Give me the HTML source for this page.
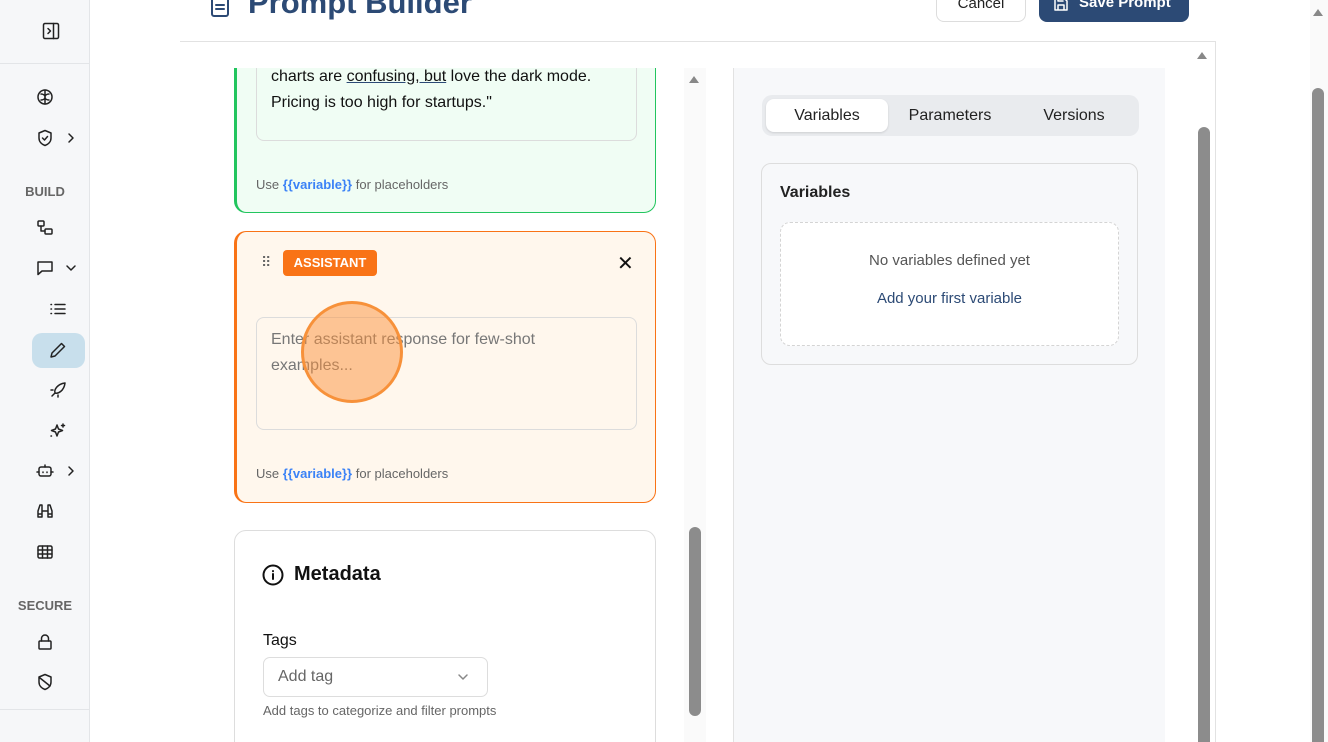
<!DOCTYPE html>
<html><head><meta charset="utf-8"><style>
*{box-sizing:border-box;margin:0;padding:0}
html,body{width:1328px;height:742px;overflow:hidden}
body{background:#fff;font-family:"Liberation Sans",sans-serif;position:relative;color:#111}
.a{position:absolute}
.side{left:0;top:0;width:90px;height:742px;background:#f6f7f9;border-right:1px solid #e3e5e8}
.ic{position:absolute;width:18px;height:18px;fill:none;stroke:#222;stroke-width:1.5;stroke-linecap:round;stroke-linejoin:round}
.sec{position:absolute;font-size:13px;font-weight:bold;color:#666;width:90px;text-align:center}
.card{position:absolute;left:234px;width:422px;border-radius:12px}
.ta{position:absolute;left:22px;width:381px;border:1px solid #dcdcdc;border-radius:8px;font-size:16px;line-height:26px;padding:0 14px}
.hint{position:absolute;left:22px;font-size:13px;color:#666}
.hint b{color:#3b82f6}
</style></head><body>
<div class="a side">
  <div class="a" style="left:0;top:63px;width:89px;border-top:1px solid #e3e5e8"></div>
  <div class="a" style="left:0;top:709px;width:89px;border-top:1px solid #e3e5e8"></div>
  <svg class="ic" style="left:42px;top:22px" viewBox="0 0 18 18"><rect x="1.5" y="1.5" width="15" height="15" rx="1.5"/><path d="M11.5 1.5v15M6 6.5l2.5 2.5L6 11.5"/></svg>
  <svg class="ic" style="left:36px;top:88px" viewBox="0 0 18 18"><circle cx="9" cy="9" r="7"/><path d="M9 2v14M5 6c2 0 4 1 4 3M13 6c-2 0-4 1-4 3M5 12c2 0 4-1 4-3M13 12c-2 0-4-1-4-3"/></svg>
  <svg class="ic" style="left:36px;top:129px" viewBox="0 0 18 18"><path d="M9 1.5l6 2.5v5c0 4-3 6.5-6 7.5-3-1-6-3.5-6-7.5V4z"/><path d="M6.5 9l2 2 3-3.5"/></svg>
  <svg class="ic" style="left:64px;top:131px;width:14px;height:14px" viewBox="0 0 14 14"><path d="M5 3l4 4-4 4"/></svg>
  <div class="sec" style="top:184px">BUILD</div>
  <svg class="ic" style="left:36px;top:219px" viewBox="0 0 18 18"><rect x="2" y="2" width="6" height="5" rx="1"/><rect x="9" y="10" width="7" height="5" rx="1"/><path d="M5 7v5h4"/></svg>
  <svg class="ic" style="left:36px;top:259px" viewBox="0 0 18 18"><path d="M2 3h14v9H6l-4 3.5z"/></svg>
  <svg class="ic" style="left:64px;top:261px;width:14px;height:14px" viewBox="0 0 14 14"><path d="M3 5l4 4 4-4"/></svg>
  <svg class="ic" style="left:49px;top:300px" viewBox="0 0 18 18"><path d="M6 4.5h10M6 9h10M6 13.5h10M2 4.5h.5M2 9h.5M2 13.5h.5"/></svg>
  <div class="a" style="left:32px;top:333px;width:53px;height:35px;border-radius:10px;background:#c8dfec"></div>
  <svg class="ic" style="left:49px;top:341px" viewBox="0 0 18 18"><path d="M12.5 2.5l3 3L6 15l-4 1 1-4z"/></svg>
  <svg class="ic" style="left:49px;top:381px" viewBox="0 0 18 18"><path d="M6 12c-1-3 2-9 10-10-1 8-7 11-10 10zM6 12l-3 3M4 9l-2 0M9 14v2"/></svg>
  <svg class="ic" style="left:49px;top:422px" viewBox="0 0 18 18"><path d="M8 3l1.5 4 4 1.5-4 1.5L8 14l-1.5-4-4-1.5 4-1.5zM14 2v3M12.5 3.5h3M2 14h.5"/></svg>
  <svg class="ic" style="left:36px;top:462px" viewBox="0 0 18 18"><rect x="3" y="5" width="12" height="9" rx="2"/><path d="M9 5V3M1 10h2M15 10h2M7 10v.5M11 10v.5"/></svg>
  <svg class="ic" style="left:64px;top:464px;width:14px;height:14px" viewBox="0 0 14 14"><path d="M5 3l4 4-4 4"/></svg>
  <svg class="ic" style="left:36px;top:502px" viewBox="0 0 18 18"><path d="M2 15V9l2-6h2v12zM16 15V9l-2-6h-2v12zM6 9h6M2 12h4M12 12h4"/></svg>
  <svg class="ic" style="left:36px;top:543px" viewBox="0 0 18 18"><rect x="2" y="3" width="14" height="12" rx="1.5"/><path d="M2 7h14M2 11h14M6.5 3v12M11.5 3v12"/></svg>
  <div class="sec" style="top:598px">SECURE</div>
  <svg class="ic" style="left:36px;top:633px" viewBox="0 0 18 18"><rect x="3" y="8" width="12" height="8" rx="1"/><path d="M5.5 8V5.5a3.5 3.5 0 017 0V8"/></svg>
  <svg class="ic" style="left:36px;top:673px" viewBox="0 0 18 18"><path d="M9 1.5l6 2.5v5c0 4-3 6.5-6 7.5-3-1-6-3.5-6-7.5V4z"/><path d="M4 5l10 8"/></svg>
</div>

<!-- header -->
<svg class="ic" style="left:209px;top:-3px;width:22px;height:22px;stroke:#2c4a75;stroke-width:2" viewBox="0 0 22 22"><rect x="3" y="1" width="16" height="18" rx="2"/><path d="M7 8h8M7 12h8"/></svg>
<div class="a" style="left:248px;top:-15px;font-size:31px;font-weight:bold;color:#2c4a75">Prompt Builder</div>
<div class="a" style="left:936px;top:-10px;width:90px;height:32px;border:1px solid #ddd;border-radius:8px;font-size:15px;text-align:center;line-height:26px;color:#222">Cancel</div>
<div class="a" style="left:1039px;top:-10px;width:150px;height:32px;background:#2c4a75;border-radius:8px;font-size:15px;font-weight:bold;color:#fff;line-height:26px;padding-left:40px">Save Prompt</div>
<svg class="ic" style="left:1053px;top:-4px;stroke:#fff;width:16px;height:16px" viewBox="0 0 16 16"><path d="M2 2h9l3 3v9H2z M5 14V9h6v5M5 2v3h5"/></svg>
<div class="a" style="left:180px;top:41px;width:1036px;border-top:1px solid #e2e2e2"></div>
<div class="a" style="left:1215px;top:41px;height:701px;border-left:1px solid #e2e2e2"></div>

<!-- left scroll area -->
<div class="a" style="left:180px;top:68px;width:526px;height:674px;overflow:hidden">
  <div class="card" style="left:54px;top:-60px;height:205px;background:#f0fdf4;border:1px solid #22c55e;border-left:3px solid #22c55e">
    <div class="ta" style="left:19px;top:0;height:132px;padding-top:54px">charts are <span style="text-decoration:underline;text-decoration-color:#2c4a75">confusing, but</span> love the dark mode.<br>Pricing is too high for startups."</div>
    <div class="hint" style="left:19px;top:168px">Use <b>{{variable}}</b> for placeholders</div>
  </div>
  <div class="card" style="left:54px;top:163px;height:272px;background:#fff7ed;border:1px solid #f97316;border-left:3px solid #f97316">
    <div class="a" style="left:24px;top:22px;font-size:14px;color:#666;letter-spacing:-1px">⠿</div>
    <div class="a" style="left:46px;top:18px;width:94px;height:26px;background:#f97316;border-radius:4px;color:#fff;font-size:13px;font-weight:bold;text-align:center;line-height:26px">ASSISTANT</div>
    <div class="a" style="left:380px;top:19px;font-size:20px;color:#111">✕</div>
    <div class="ta" style="left:19px;top:85px;height:113px;padding-top:9px;color:#777"><div style="width:300px">Enter assistant response for few-shot examples...</div></div>
    <div class="hint" style="left:19px;top:234px">Use <b>{{variable}}</b> for placeholders</div>
  </div>
  <div class="card" style="left:54px;top:462px;height:260px;background:#fff;border:1px solid #ddd">
    <svg class="ic" style="left:27px;top:33px;width:22px;height:22px;stroke:#111;stroke-width:2" viewBox="0 0 22 22"><circle cx="11" cy="11" r="9.5"/><path d="M11 10v5M11 7v.3"/></svg>
    <div class="a" style="left:59px;top:32px;font-size:20px;font-weight:bold">Metadata</div>
    <div class="a" style="left:28px;top:101px;font-size:16px">Tags</div>
    <div class="a" style="left:28px;top:126px;width:225px;height:40px;border:1px solid #ddd;border-radius:7px;font-size:16px;color:#666;padding:10px 14px">Add tag</div>
    <svg class="ic" style="left:222px;top:140px;width:12px;height:12px;stroke:#888" viewBox="0 0 12 12"><path d="M2 4l4 4 4-4"/></svg>
    <div class="a" style="left:28px;top:172px;font-size:13px;color:#666">Add tags to categorize and filter prompts</div>
  </div>
  <div class="a" style="left:504px;top:0;width:22px;height:674px;background:#fafafa"></div>
  <div class="a" style="left:509px;top:459px;width:12px;height:189px;background:#8c8c8c;border-radius:6px"></div>
  <div class="a" style="left:509px;top:8px;width:0;height:0;border-left:5px solid transparent;border-right:5px solid transparent;border-bottom:7px solid #888"></div>
</div>
<div class="a" style="left:301px;top:301px;width:102px;height:102px;border-radius:50%;background:rgba(251,146,60,.5);border:3px solid #f7913a"></div>

<!-- right pane -->
<div class="a" style="left:733px;top:68px;width:432px;height:674px;background:#f7f8fa;border-left:1px solid #e2e2e2">
  <div class="a" style="left:28px;top:27px;width:377px;height:41px;background:#e9ebee;border-radius:10px"></div>
  <div class="a" style="left:32px;top:31px;width:122px;height:33px;background:#fff;border-radius:8px;box-shadow:0 1px 2px rgba(0,0,0,.12);font-size:16px;text-align:center;line-height:33px;color:#222">Variables</div>
  <div class="a" style="left:154px;top:31px;width:124px;font-size:16px;text-align:center;line-height:33px;color:#222">Parameters</div>
  <div class="a" style="left:278px;top:31px;width:124px;font-size:16px;text-align:center;line-height:33px;color:#222">Versions</div>
  <div class="a" style="left:27px;top:95px;width:377px;height:202px;border:1px solid #ddd;border-radius:10px;background:#f7f8fa">
    <div class="a" style="left:18px;top:20px;font-size:16px;font-weight:bold;color:#222">Variables</div>
    <div class="a" style="left:18px;top:58px;width:339px;height:124px;border:1px dashed #d4d4d4;border-radius:10px;background:#fff">
      <div class="a" style="left:0;top:29px;width:337px;text-align:center;font-size:15px;color:#555">No variables defined yet</div>
      <div class="a" style="left:0;top:67px;width:337px;text-align:center;font-size:15px;color:#2c4a75">Add your first variable</div>
    </div>
  </div>
</div>
<div class="a" style="left:1197px;top:52px;width:0;height:0;border-left:5px solid transparent;border-right:5px solid transparent;border-bottom:7px solid #888"></div>
<div class="a" style="left:1198px;top:127px;width:12px;height:615px;background:#8c8c8c;border-radius:6px 6px 0 0"></div>
<div class="a" style="left:1310px;top:0;width:18px;height:742px;background:#fafafa"></div>
<div class="a" style="left:1313px;top:9px;width:0;height:0;border-left:5px solid transparent;border-right:5px solid transparent;border-bottom:7px solid #888"></div>
<div class="a" style="left:1312px;top:88px;width:12px;height:654px;background:#8c8c8c;border-radius:6px 6px 0 0"></div>
</body></html>
